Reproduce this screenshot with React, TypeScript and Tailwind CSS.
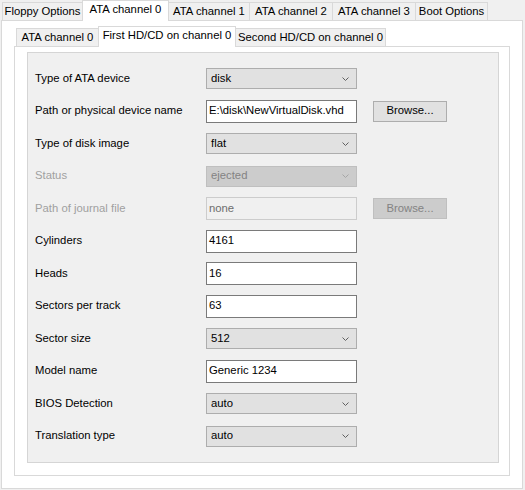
import React from "react";

type Row = {
  label: string;
  type: "select" | "input";
  value: string;
  disabled?: boolean;
  browse?: boolean;
};

const rows: Row[] = [
  { label: "Type of ATA device", type: "select", value: "disk" },
  { label: "Path or physical device name", type: "input", value: "E:\\disk\\NewVirtualDisk.vhd", browse: true },
  { label: "Type of disk image", type: "select", value: "flat" },
  { label: "Status", type: "select", value: "ejected", disabled: true },
  { label: "Path of journal file", type: "input", value: "none", disabled: true, browse: true },
  { label: "Cylinders", type: "input", value: "4161" },
  { label: "Heads", type: "input", value: "16" },
  { label: "Sectors per track", type: "input", value: "63" },
  { label: "Sector size", type: "select", value: "512" },
  { label: "Model name", type: "input", value: "Generic 1234" },
  { label: "BIOS Detection", type: "select", value: "auto" },
  { label: "Translation type", type: "select", value: "auto" },
];

function Chevron({ disabled }: { disabled?: boolean }) {
  return (
    <svg width="7" height="4" viewBox="0 0 7 4" className="absolute right-[7px] top-1/2 -translate-y-1/2">
      <path
        d="M0.5 0.5 L3.5 3.5 L6.5 0.5"
        fill="none"
        stroke={disabled ? "#a6a6a6" : "#606060"}
        strokeWidth="1"
      />
    </svg>
  );
}

function Select({ value, disabled }: { value: string; disabled?: boolean }) {
  return (
    <div
      className={
        disabled
          ? "relative flex h-[21px] w-[151px] items-center border border-[#bfbfbf] bg-[#cccccc] pl-[4px] text-[#838383]"
          : "relative flex h-[21px] w-[151px] items-center border border-[#adadad] bg-[#e1e1e1] pl-[4px] text-black"
      }
    >
      <span>{value}</span>
      <Chevron disabled={disabled} />
    </div>
  );
}

function Input({ value, disabled }: { value: string; disabled?: boolean }) {
  return (
    <div
      className={
        disabled
          ? "flex h-[23px] w-[151px] items-center border border-[#cccccc] bg-[#f0f0f0] pl-[2px] text-[#6d6d6d]"
          : "flex h-[23px] w-[151px] items-center border border-[#7a7a7a] bg-white pl-[2px] text-black"
      }
    >
      <span className="whitespace-nowrap">{value}</span>
    </div>
  );
}

function Browse({ disabled }: { disabled?: boolean }) {
  return (
    <div
      className={
        disabled
          ? "ml-[16px] flex h-[21px] w-[74px] items-center justify-center border border-[#bfbfbf] bg-[#cccccc] text-[#838383]"
          : "ml-[16px] flex h-[21px] w-[74px] items-center justify-center border border-[#adadad] bg-[#e1e1e1] text-black"
      }
    >
      Browse...
    </div>
  );
}

function Tab({
  label,
  width,
  selected,
  first,
}: {
  label: string;
  width: string;
  selected?: boolean;
  first?: boolean;
}) {
  const base = selected
    ? "relative z-10 mb-[-1px] flex h-[21px] items-start justify-center border border-b-0 border-[#d9d9d9] bg-white pt-[3px]"
    : "relative flex h-[18px] items-center justify-center border border-b-0 border-[#d9d9d9] bg-[#f0f0f0] pt-[1px]";
  return (
    <div className={`${base} ${width} ${first ? "" : "ml-[-1px]"} whitespace-nowrap`}>
      {label}
    </div>
  );
}

export default function App() {
  return (
    <div className="h-[490px] w-[525px] overflow-hidden bg-[#f0f0f0] font-['Liberation_Sans',Arial,sans-serif] text-[11.3px] leading-none text-black">
      {/* outer tab strip */}
      <div className="flex h-[20px] items-end pl-[2px]">
        <Tab label="Floppy Options" width="w-[81px]" first />
        <Tab label="ATA channel 0" width="w-[87px]" selected />
        <Tab label="ATA channel 1" width="w-[82px]" />
        <Tab label="ATA channel 2" width="w-[84px]" />
        <Tab label="ATA channel 3" width="w-[84px]" />
        <Tab label="Boot Options" width="w-[73px]" />
      </div>
      {/* outer panel */}
      <div className="ml-[1px] h-[469px] w-[522px] border border-[#d9d9d9] bg-white px-[12px]">
        {/* inner tab strip */}
        <div className="flex h-[25px] items-end pl-[2px]">
          <Tab label="ATA channel 0" width="w-[83px]" first />
          <Tab label="First HD/CD on channel 0" width="w-[138px]" selected />
          <Tab label="Second HD/CD on channel 0" width="w-[151px]" />
        </div>
        {/* inner panel */}
        <div className="h-[430px] w-[496px] border border-[#d9d9d9] bg-white pl-[12px] pt-[5px]">
          <div className="h-[411px] w-[472px] border border-[#d5d5d5] bg-[#f0f0f0] pt-[9px]">
            {rows.map((r, i) => (
              <div
                key={r.label}
                className={`flex items-center pl-[7px] ${i % 2 === 0 ? "h-[33px]" : "h-[32px]"}`}
              >
                <div className={`w-[171px] whitespace-nowrap ${r.disabled ? "text-[#a0a0a0]" : "text-black"}`}>
                  {r.label}
                </div>
                {r.type === "select" ? (
                  <Select value={r.value} disabled={r.disabled} />
                ) : (
                  <Input value={r.value} disabled={r.disabled} />
                )}
                {r.browse && <Browse disabled={r.disabled} />}
              </div>
            ))}
          </div>
        </div>
      </div>
    </div>
  );
}
